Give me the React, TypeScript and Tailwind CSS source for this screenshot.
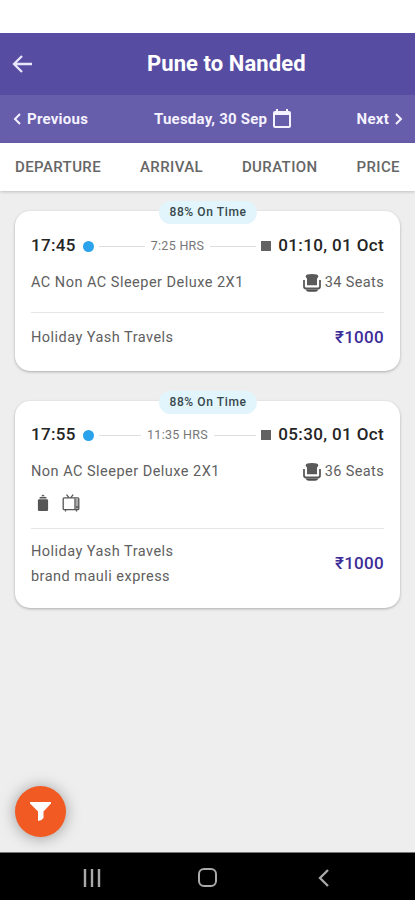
type Trip = {
  depart: string;
  arrive: string;
  duration: string;
  bus: string;
  seats: number;
  price: string;
  operator: string[];
  amenities: boolean;
};

const trips: Trip[] = [
  { depart: "17:45", arrive: "01:10, 01 Oct", duration: "7:25 HRS", bus: "AC Non AC Sleeper Deluxe 2X1", seats: 34, price: "₹1000", operator: ["Holiday Yash Travels"], amenities: false },
  { depart: "17:55", arrive: "05:30, 01 Oct", duration: "11:35 HRS", bus: "Non AC Sleeper Deluxe 2X1", seats: 36, price: "₹1000", operator: ["Holiday Yash Travels", "brand mauli express"], amenities: true },
];

function SeatIcon() {
  return (
    <svg width="20" height="20" viewBox="0 0 20 20" fill="none" className="shrink-0">
      <path d="M3.6 3.4Q3.8 1 10 1T16.4 3.4L15 5.8V12.2H5V5.8Z" fill="#5a5a5a" />
      <path d="M2 7V13.5Q2 15.5 4.2 15.5H15.8Q18 15.5 18 13.5V7" stroke="#5a5a5a" strokeWidth="1.8" />
      <path d="M3.5 16.4H16.5Q15.5 18.8 13 18.8H7Q4.5 18.8 3.5 16.4Z" fill="#4d4d4d" />
    </svg>
  );
}

function BottleIcon() {
  return (
    <svg width="12" height="18" viewBox="0 0 12 18" className="shrink-0">
      <path d="M4 2.2L6 .4L8 2.2ZM2.6 3H9.4V4.4H2.6ZM.9 6.3Q.9 5.2 2.1 5.2H9.9Q11.1 5.2 11.1 6.3V15.8Q11.1 17 9.9 17H2.1Q.9 17 .9 15.8Z" fill="#555" />
    </svg>
  );
}

function TvIcon() {
  return (
    <svg width="18" height="18" viewBox="0 0 18 18" fill="none" stroke="#555" strokeWidth="1.3" className="shrink-0">
      <path d="M15 5V15" strokeWidth="3" stroke="#aaa" />
      <rect x="1.2" y="3.8" width="15.6" height="11.9" rx="1" />
      <path d="M4.5 .6L7 3.6M11.2 .6L8.8 3.6M3.5 16V17.4M14.5 16V17.4M13 4.2V15.5M14 13H16.5" />
    </svg>
  );
}

function TripCard({ trip }: { trip: Trip }) {
  return (
    <section className={trip.amenities ? "relative w-[385px] rounded-[15px] bg-white px-4 pt-[22px] shadow-[0_1px_3px_rgba(0,0,0,0.28)]" : "relative w-[385px] rounded-[15px] bg-white px-4 pt-[23px] shadow-[0_1px_3px_rgba(0,0,0,0.28)]"}>
      <div className="absolute -top-[10px] left-[144px] flex h-[23px] w-[98px] items-center justify-center rounded-full bg-[#e2f5fc] pb-px text-[12px] font-medium tracking-[0.6px] text-[#37474b]">
        88% On Time
      </div>
      <div className="flex h-6 items-center whitespace-nowrap text-[#242424]">
        <span className="w-[52px] text-[17px] font-medium tracking-[0.35px]">{trip.depart}</span>
        <span className="size-[11px] shrink-0 rounded-full bg-[#2ba2ec]" />
        <span className="ml-[5px] h-px flex-1 bg-[#dedede]" />
        <span className="px-[6px] text-[12.5px] tracking-[0.3px] text-[#777777]">{trip.duration}</span>
        <span className="mr-[5px] h-px flex-1 bg-[#dedede]" />
        <span className="size-[10px] shrink-0 bg-[#626262]" />
        <span className="w-[113px] text-right text-[17px] font-medium tracking-[0.37px]">{trip.arrive}</span>
      </div>
      <div className="mt-[13px] flex h-6 items-center justify-between whitespace-nowrap text-[14.5px] tracking-[0.48px] text-[#606060]">
        <span>{trip.bus}</span>
        <span className="flex items-center gap-[3px] tracking-[0.36px]"><SeatIcon />{trip.seats} Seats</span>
      </div>
      {trip.amenities && (
        <div className="mt-[7px] flex h-6 items-center gap-[13px] pl-[6px]"><BottleIcon /><TvIcon /></div>
      )}
      <div className={trip.amenities ? "mt-[13px] h-px bg-[#e6e6e6]" : "mt-[17px] h-px bg-[#e6e6e6]"} />
      <div className={trip.amenities ? "flex h-[79px] items-center justify-between pb-[9px]" : "flex h-[58px] items-center justify-between pb-[9px]"}>
        <div className="text-[14.5px] leading-[25px] tracking-[0.47px] text-[#606060]">
          {trip.operator.map((line) => <p key={line}>{line}</p>)}
        </div>
        <span className="text-[17px] font-medium tracking-[0.3px] text-[#3c2c98]">{trip.price}</span>
      </div>
    </section>
  );
}

export default function App() {
  return (
    <main className="flex h-[900px] w-[415px] flex-col overflow-hidden bg-[#eeeeee] pt-[33px] font-['Roboto','Noto_Sans',sans-serif] shadow-[inset_0_33px_white]">
      <header className="flex h-[62px] shrink-0 items-center bg-[#564ca2] pl-3 text-white">
        <svg width="20" height="18" viewBox="0 0 20 18" fill="none" stroke="#e9e5fa" strokeWidth="2.3"><path d="M10 1L2 9L10 17M2 9H20" /></svg>
        <h1 className="relative -top-px ml-[115px] whitespace-nowrap text-[22px] font-bold tracking-[0.08px]">Pune to Nanded</h1>
      </header>
      <div className="flex h-12 shrink-0 items-center bg-[#665dab] pl-[13px] pr-3 text-[15px] font-bold text-[#f5f2ff]">
        <span className="flex w-[141px] items-center gap-[6px] tracking-[0.25px]">
          <svg width="8" height="12" viewBox="0 0 8 12" fill="none" stroke="currentColor" strokeWidth="2"><path d="M7 1L2 6L7 11" /></svg>
          Previous
        </span>
        <span className="flex items-center gap-[6px] whitespace-nowrap tracking-[0.22px]">
          Tuesday, 30 Sep
          <svg width="18" height="20" viewBox="0 0 18 20"><path fill="currentColor" fillRule="evenodd" d="M3 0H5V2H13V0H15V2H16Q18 2 18 4V17Q18 19 16 19H2Q0 19 0 17V4Q0 2 2 2H3ZM2 6V17H16V6Z" /></svg>
        </span>
        <span className="ml-auto flex items-center gap-[6px] tracking-[0.25px]">
          Next
          <svg width="8" height="12" viewBox="0 0 8 12" fill="none" stroke="currentColor" strokeWidth="2"><path d="M1 1L6 6L1 11" /></svg>
        </span>
      </div>
      <nav className="flex h-12 shrink-0 items-center justify-between bg-white px-[15px] text-[15px] font-medium tracking-[0.4px] text-[#666] shadow-[0_1px_3px_rgba(0,0,0,0.2)]">
        <span>DEPARTURE</span><span>ARRIVAL</span><span>DURATION</span><span>PRICE</span>
      </nav>
      <div className="mt-5 flex flex-col gap-[30px] pl-[15px]">
        {trips.map((trip) => <TripCard key={trip.depart} trip={trip} />)}
      </div>
      <button className="mb-[15px] ml-[15px] mt-auto flex size-[51px] shrink-0 items-center justify-center rounded-full bg-[#f15a22] shadow-[0_1px_15px_rgba(0,0,0,0.35)]">
        <svg width="21" height="19" viewBox="0 0 21 19"><path d="M0 0H21V1.5L13.5 9.5V16L11.5 18L8 19V9.5L0 1.5Z" fill="white" /></svg>
      </button>
      <footer className="flex h-12 shrink-0 items-center border-t border-[#777] bg-black pl-[83px] pt-[2px]">
        <svg width="18" height="18" viewBox="0 0 18 18" stroke="#aaa" strokeWidth="2.4"><path d="M2 0V18M9 0V18M16 0V18" /></svg>
        <span className="ml-[97px] size-[19px] rounded-[6px] border-2 border-[#aaa]" />
        <svg className="ml-[101px]" width="12" height="18" viewBox="0 0 12 18" fill="none" stroke="#aaa" strokeWidth="2.3"><path d="M10 1L2 9L10 17" /></svg>
      </footer>
    </main>
  );
}
